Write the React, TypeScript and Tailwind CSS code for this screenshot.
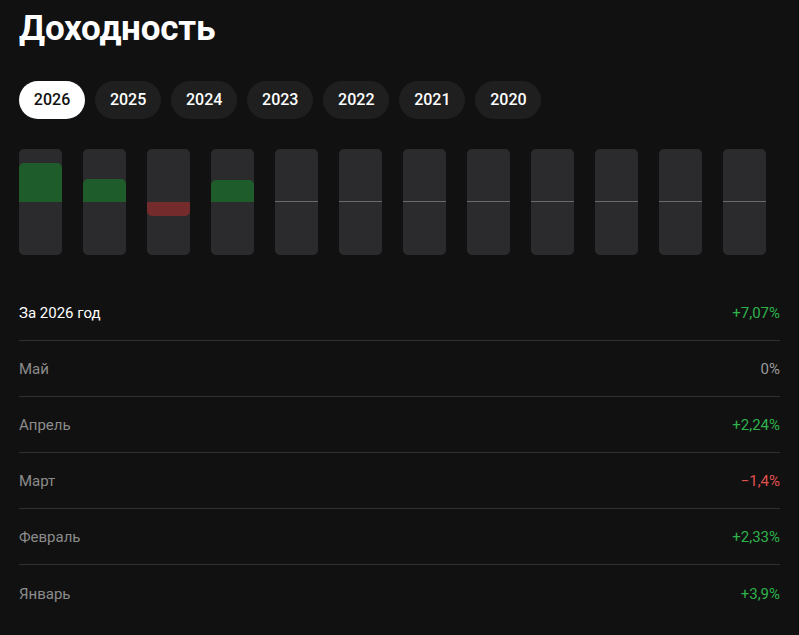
import React from 'react';

const years = ['2026', '2025', '2024', '2023', '2022', '2021', '2020'];

// monthly values, Jan..Dec (null = no data yet)
const bars: (number | null)[] = [3.9, 2.33, -1.4, 2.24, 0, null, null, null, null, null, null, null];

const rows = [
  { label: 'За 2026 год', value: '+7,07%', tone: 'pos', main: true },
  { label: 'Май', value: '0%', tone: 'zero' },
  { label: 'Апрель', value: '+2,24%', tone: 'pos' },
  { label: 'Март', value: '−1,4%', tone: 'neg' },
  { label: 'Февраль', value: '+2,33%', tone: 'pos' },
  { label: 'Январь', value: '+3,9%', tone: 'pos' },
];

const Bar = ({ v }: { v: number | null }) => {
  const h = v ? Math.round(Math.abs(v) * 10) : 0;
  return (
    <div className="relative w-[43px] h-[106px] rounded-[5px] bg-[#2b2b2d] overflow-hidden">
      {v !== null && v > 0 && (
        <div className="absolute left-0 right-0 bottom-[53px] bg-[#1f5c2c] rounded-t-[5px]" style={{ height: h }} />
      )}
      {v !== null && v < 0 && (
        <div className="absolute left-0 right-0 top-[53px] bg-[#742b2c] rounded-b-[5px]" style={{ height: h }} />
      )}
      {(v === null || v === 0) && (
        <div className="absolute left-0 right-0 top-[52px] h-px bg-[#6a6a6a]" />
      )}
    </div>
  );
};

export default function App() {
  return (
    <div className="min-h-[635px] w-full bg-[#111111] text-white px-[19px] pt-[8px]" style={{ fontFamily: 'Roboto, "Noto Sans", sans-serif' }}>
      <h1 className="text-[35px] font-bold leading-[42px] tracking-[-0.2px]">Доходность</h1>

      <div className="flex gap-[10px] mt-[31px]">
        {years.map((y, i) => (
          <div
            key={y}
            className={
              i === 0
                ? 'h-[38px] px-[14.85px] rounded-full bg-white text-[#111] text-[16px] font-medium flex items-center'
                : 'h-[38px] px-[14.85px] rounded-full bg-[#1f1f20] text-white text-[16px] font-medium flex items-center'
            }
          >
            {y}
          </div>
        ))}
      </div>

      <div className="flex gap-[21px] mt-[30px]">
        {bars.map((v, i) => (
          <Bar key={i} v={v} />
        ))}
      </div>

      <div className="mt-[30px] w-[761px]">
        {rows.map((r, i) => (
          <div
            key={r.label}
            className={
              'flex items-center justify-between h-[56px] pt-[2px] text-[15px] ' +
              (i < rows.length - 1 ? 'border-b border-[#303030]' : '')
            }
          >
            <span className={r.main ? 'text-white' : 'text-[#8c8c8c]'}>{r.label}</span>
            <span
              className={
                r.tone === 'pos' ? 'text-[#2fb24c]' : r.tone === 'neg' ? 'text-[#e0504e]' : 'text-[#9a9a9a]'
              }
            >
              {r.value}
            </span>
          </div>
        ))}
      </div>
    </div>
  );
}
